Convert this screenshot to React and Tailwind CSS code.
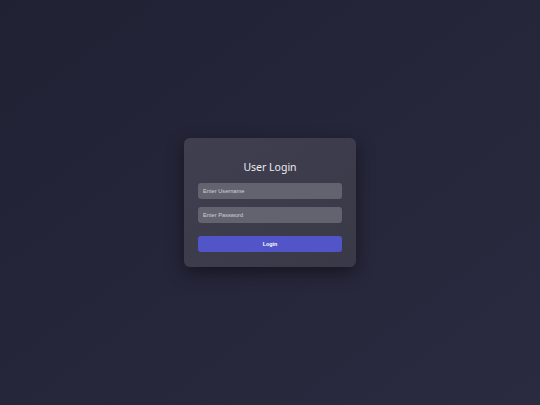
export default function App() {
  return (
    <div className="min-h-screen w-full flex items-center justify-center bg-gradient-to-br from-[#212134] to-[#2a2b40]">
      <div className="w-[172px] rounded-[6px] bg-gradient-to-br from-[#403f4f] to-[#3a3948] shadow-[0_6px_18px_rgba(0,0,0,0.45)] px-[14px] pt-[22px] pb-[15px] flex flex-col">
        <h1 className="text-center text-[10.5px] leading-[14px] text-[#ecebf2] font-['Noto_Sans',sans-serif] mb-[9px]">
          User Login
        </h1>
        <input
          type="text"
          placeholder="Enter Username"
          className="h-[16px] w-full rounded-[3px] bg-[#63626f] px-[5px] text-[5.7px] text-[#e4e3ea] placeholder:text-[#d2d1da] font-['Liberation_Sans',Arial,sans-serif] outline-none"
        />
        <input
          type="password"
          placeholder="Enter Password"
          className="mt-[8px] h-[16px] w-full rounded-[3px] bg-[#63626f] px-[5px] text-[5.7px] text-[#e4e3ea] placeholder:text-[#d2d1da] font-['Liberation_Sans',Arial,sans-serif] outline-none"
        />
        <button className="mt-[13px] h-[16px] w-full rounded-[3px] bg-[#5155c8] text-[5.4px] font-bold text-white font-['Liberation_Sans',Arial,sans-serif]">
          Login
        </button>
      </div>
    </div>
  );
}
